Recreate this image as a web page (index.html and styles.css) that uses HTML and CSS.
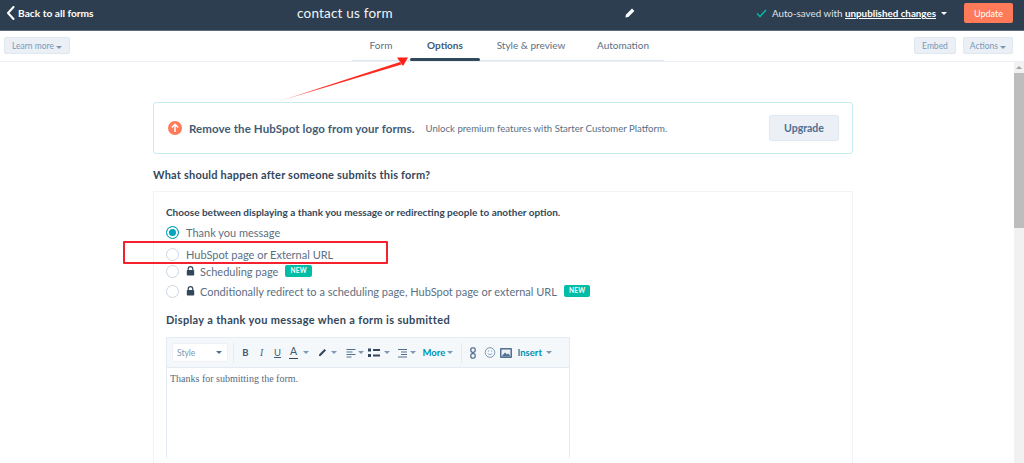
FILE: index.html
```html
<!DOCTYPE html>
<html lang="en">

<head>
  <meta charset="UTF-8" />
  <title>contact us form</title>
  <link rel="stylesheet" href="styles.css">
</head>

<body>
  <!-- top bar -->
  <header class="topbar">
    <a class="back">
      <svg width="9" height="14" viewBox="0 0 9 14"><path d="M6.500 1 1 7l5.500 6" fill="none" stroke="#fff" stroke-width="2" stroke-linecap="round" stroke-linejoin="round"/></svg>
      Back to all forms
    </a>
    <div class="form-name">contact us form</div>
    <svg class="pencil" width="10" height="10" viewBox="0 0 10 10"><path d="M7 .6 9.400 3 3.300 9.100.4 9.600.9 6.700z" fill="#fff"/></svg>
    <div class="save-state">
      <svg width="11" height="9" viewBox="0 0 11 9"><path d="M1 4.500 4 7.500 10 1" fill="none" stroke="#00bda5" stroke-width="1.500"/></svg>
      <span>Auto-saved with <b>unpublished changes</b></span>
      <i class="caret caret-white"></i>
    </div>
    <button class="btn-update">Update</button>
  </header>

  <!-- tabs -->
  <nav class="subnav">
    <button class="btn-small btn-learn">Learn more <i class="caret"></i></button>
    <ul class="tabs">
      <li>Form</li>
      <li class="active">Options</li>
      <li>Style &amp; preview</li>
      <li>Automation</li>
    </ul>
    <div class="subnav-right">
      <button class="btn-small btn-embed">Embed</button>
      <button class="btn-small btn-actions">Actions <i class="caret"></i></button>
    </div>
  </nav>

  <div class="page">
    <main class="content">
      <div class="banner">
        <svg class="up-icon" width="14" height="14" viewBox="0 0 14 14"><circle cx="7" cy="7" r="7" fill="#ff7a59"/><path d="M7 11V3.500M3.800 6.500 7 3.300l3.200 3.200" fill="none" stroke="#fff" stroke-width="1.500"/></svg>
        <strong class="banner-title">Remove the HubSpot logo from your forms.</strong>
        <span class="banner-text">Unlock premium features with Starter Customer Platform.</span>
        <button class="btn-upgrade">Upgrade</button>
      </div>

      <h2 class="question">What should happen after someone submits this form?</h2>

      <section class="card">
        <p class="choose">Choose between displaying a thank you message or redirecting people to another option.</p>

        <div class="option opt-thanks"><span class="radio checked"></span>Thank you message</div>
        <div class="option opt-hubspot"><span class="radio"></span>HubSpot page or External URL</div>
        <div class="option opt-sched">
          <span class="radio"></span>
          <svg class="lock" width="9" height="10" viewBox="0 0 9 10"><path d="M2.200 4V3a2.300 2.300 0 0 1 4.600 0v1" fill="none" stroke="#33475b" stroke-width="1.200"/><rect x=".8" y="4" width="7.400" height="5.500" rx=".8" fill="#33475b"/></svg>
          Scheduling page <span class="tag-new">NEW</span>
        </div>
        <div class="option opt-cond">
          <span class="radio"></span>
          <svg class="lock" width="9" height="10" viewBox="0 0 9 10"><path d="M2.200 4V3a2.300 2.300 0 0 1 4.600 0v1" fill="none" stroke="#33475b" stroke-width="1.200"/><rect x=".8" y="4" width="7.400" height="5.500" rx=".8" fill="#33475b"/></svg>
          Conditionally redirect to a scheduling page, HubSpot page or external URL <span class="tag-new">NEW</span>
        </div>

        <h3 class="display-title">Display a thank you message when a form is submitted</h3>

        <div class="editor">
          <div class="toolbar">
            <div class="style-select">Style <i class="caret caret-dark"></i></div>
            <span class="sep"></span>
            <span class="tool tool-b">B</span>
            <span class="tool tool-i">I</span>
            <span class="tool tool-u">U</span>
            <span class="tool"><span class="tool-a">A</span></span><i class="caret caret-a"></i>
            <svg class="tool-svg tool-pen" height="12" viewBox="0 0 12 12"><path d="M3 7.500 8.500 2l1.500 1.500L4.500 9H3z" fill="#33475b"/><path d="M1 11.300h7" stroke="#fff" stroke-width="1.200"/></svg><i class="caret caret-pen"></i>
            <svg class="tool-svg tool-align" height="10" viewBox="0 0 11 10"><path d="M1 1.500h9M1 4h6M1 6.500h9M1 9h5" stroke="#516f90" stroke-width="1.200"/></svg><i class="caret caret-a"></i>
            <svg class="tool-svg tool-list" height="10" viewBox="0 0 12 10"><path d="M5 2h7M5 7.500h7" stroke="#33475b" stroke-width="2"/><rect x="0" y="0.500" width="3" height="3" fill="#33475b"/><rect x="0" y="6" width="3" height="3" fill="#33475b"/></svg><i class="caret caret-list"></i>
            <svg class="tool-svg tool-indent" height="10" viewBox="0 0 12 10"><path d="M3 1.500h9M6 4h6M6 6.500h6M3 9h9" stroke="#516f90" stroke-width="1.200"/></svg><i class="caret caret-pen"></i>
            <span class="tool-link link-more">More</span><i class="caret"></i>
            <span class="sep sep-two"></span>
            <svg class="tool-svg tool-chain" height="12" viewBox="0 0 6 12"><rect x=".8" y=".8" width="4.400" height="4.600" rx="1.800" fill="none" stroke="#516f90" stroke-width="1.300"/><rect x=".8" y="6.600" width="4.400" height="4.600" rx="1.800" fill="none" stroke="#516f90" stroke-width="1.300"/></svg>
            <svg class="tool-svg tool-smile" height="11" viewBox="0 0 11 11"><circle cx="5.500" cy="5.500" r="4.800" fill="none" stroke="#7c98b6"/><path d="M3.200 6.500c1.200 1.300 3.400 1.300 4.600 0" fill="none" stroke="#7c98b6" stroke-width=".8"/><path d="M3.500 4h1M6.500 4h1" stroke="#7c98b6"/></svg>
            <svg class="tool-svg tool-img" height="10" viewBox="0 0 12 10"><rect width="12" height="10" rx="1" fill="#516f90"/><rect x="1.500" y="1.500" width="9" height="7" fill="#eaf0f6"/><path d="M1.500 8.500 5 4.500l2 2 1.500-1 2 3z" fill="#516f90"/></svg>
            <span class="tool-link link-insert">Insert</span><i class="caret"></i>
          </div>
          <div class="editor-body">Thanks for submitting the form.</div>
        </div>
      </section>
    </main>

    <div class="scrollbar">
      <span class="scroll-up"></span>
      <div class="scroll-thumb"></div>
    </div>
  </div>

  <!-- screenshot annotations -->
  <svg class="mark-arrow" width="140" height="50" viewBox="0 0 140 50">
    <defs>
      <linearGradient id="fade" x1="0" y1="1" x2="1" y2="0">
        <stop offset="0" stop-color="#ff4a40" stop-opacity=".5"/>
        <stop offset=".35" stop-color="#ff2a1f"/>
      </linearGradient>
    </defs>
    <path d="M1 44.500 123 5 124.500 7.500z" fill="url(#fade)"/>
    <path d="M131 .5 120 .5 126 9z" fill="#ff1f14"/>
  </svg>
  <div class="mark-box"></div>
</body>

</html>
```

FILE: styles.css
```css
* {
  margin: 0;
  padding: 0;
  box-sizing: border-box;
}

html,
body {
  height: 463px;
  overflow: hidden;
}

body {
  position: relative;
  background: #fff;
  font-family: Lato, "Noto Sans", sans-serif;
  color: #33475b;
}

ul {
  list-style: none;
}

button {
  font-family: inherit;
  border: none;
}

.caret {
  display: inline-block;
  flex: none;
  width: 0;
  height: 0;
  border-left: 3px solid transparent;
  border-right: 3px solid transparent;
  border-top: 3px solid #7c98b6;
}

.caret-white {
  border-top-color: #fff;
}

.caret-dark {
  border-top-color: #516f90;
}

/* top bar */
.topbar {
  display: flex;
  align-items: center;
  height: 31px;
  padding: 0 11px 4px 7px;
  background: #2d3e50;
  border-bottom: 1px solid #5d6c7c;
  color: #fff;
}

.back {
  display: flex;
  flex: none;
  align-items: center;
  gap: 2px;
  width: 290px;
  font-size: 10.200px;
  font-weight: 700;
}

.form-name {
  flex: none;
  width: 328px;
  font-size: 13.500px;
  color: #f2f5f8;
  letter-spacing: .2px;
}

.pencil {
  flex: none;
}

.save-state {
  display: flex;
  flex: none;
  align-items: center;
  gap: 5px;
  margin-left: auto;
  font-size: 9.800px;
  color: #dfe3eb;
  white-space: nowrap;
}

.save-state b {
  text-decoration: underline;
  color: #fff;
}

.btn-update {
  flex: none;
  margin-left: 17px;
  width: 49px;
  height: 20px;
  border-radius: 2px;
  background: #ff7a59;
  color: #fff;
  font-size: 9px;
}

/* tabs */
.subnav {
  display: flex;
  align-items: center;
  height: 31px;
  padding: 0 11px 1px 4px;
  border-bottom: 1px solid #eaf0f6;
}

.btn-small {
  height: 17px;
  background: #eaf0f6;
  border: 1px solid #dfe7f0;
  border-radius: 2px;
  color: #7c98b6;
  font-size: 8.500px;
}

.btn-learn {
  width: 66px;
  flex: none;
}

.tabs {
  display: flex;
  align-self: flex-end;
  height: 31px;
  margin-left: 282px;
  margin-bottom: -1px;
  border-bottom: 1px solid #dfe7f0;
}

.tabs li {
  padding: 9px 0 0;
  font-size: 10px;
  color: #5c6f82;
  text-align: center;
  width: 70px;
}

.tabs li:first-child {
  width: 58px;
}

.tabs li.active {
  position: relative;
  font-weight: 700;
  color: #425b76;
}

.tabs li.active::after {
  content: "";
  position: absolute;
  left: 0;
  right: 0;
  bottom: -1px;
  height: 3px;
  border-radius: 2px;
  background: #33475b;
}

.tabs li:nth-child(3) {
  width: 96px;
  padding-left: 6px;
}

.tabs li:nth-child(4) {
  width: 88px;
  padding-left: 21px;
  text-align: left;
}

.subnav-right {
  display: flex;
  gap: 7px;
  margin-left: auto;
}

.btn-embed {
  width: 42px;
}

.btn-actions {
  width: 50px;
}

/* page */
.page {
  display: flex;
  height: 402px;
}

.content {
  flex: 1;
  padding: 40px 0 0 153px;
  overflow: hidden;
}

.banner {
  display: flex;
  align-items: center;
  width: 700px;
  height: 52px;
  padding: 0 13px 0 14px;
  border: 1px solid #c5edf2;
  border-radius: 3px;
}

.up-icon {
  flex: none;
  margin-right: 7px;
}

.banner-title {
  font-size: 11.500px;
  letter-spacing: .1px;
  color: #425b76;
}

.banner-text {
  margin-left: 11px;
  font-size: 9.600px;
  color: #5c6f82;
}

.btn-upgrade {
  margin-left: auto;
  width: 70px;
  height: 26px;
  background: #eaf0f6;
  border: 1px solid #dfe7f0;
  border-radius: 2px;
  color: #506e91;
  font-size: 10.500px;
  font-weight: 700;
}

.question {
  margin-top: 14px;
  font-size: 11px;
  line-height: 14px;
  letter-spacing: .2px;
  color: #33475b;
}

.card {
  width: 700px;
  height: 280px;
  margin-top: 9px;
  padding: 14px 12px 0;
  border: 1px solid #f1f3f6;
  border-bottom: none;
}

.choose {
  font-size: 10px;
  line-height: 13px;
  font-weight: 700;
  color: #33475b;
}

.option {
  display: flex;
  align-items: center;
  height: 14px;
  font-size: 11px;
  color: #5c6f82;
  white-space: nowrap;
}

.opt-thanks {
  margin-top: 6px;
}

.opt-hubspot {
  margin-top: 8px;
}

.opt-sched {
  margin-top: 3px;
}

.opt-cond {
  margin-top: 6px;
}

.radio {
  flex: none;
  width: 13px;
  height: 13px;
  margin-right: 7px;
  border: 1px solid #cbd6e2;
  border-radius: 50%;
  background: #fff;
}

.radio.checked {
  border: 1.500px solid #00a4bd;
  box-shadow: inset 0 0 0 2px #fff;
  background: #00a4bd;
}

.lock {
  margin: 0 5px 0 0;
  flex: none;
}

.tag-new {
  margin-left: 7px;
  padding: 0 5px;
  height: 12px;
  line-height: 12px;
  border-radius: 2px;
  background: #00bda5;
  color: #fff;
  font-size: 6.500px;
  font-weight: 700;
  letter-spacing: .3px;
}

.display-title {
  margin-top: 15px;
  font-size: 11px;
  line-height: 14px;
  letter-spacing: .34px;
  color: #33475b;
}

.editor {
  width: 404px;
  margin-top: 10px;
  border: 1px solid #e5ebf2;
  border-bottom: none;
}

/* toolbar items sit at irregular gaps, so each one has its own margin */
.toolbar {
  display: flex;
  align-items: center;
  height: 30px;
  padding: 0 0 0 5px;
  background: #f5f8fa;
  border-bottom: 1px solid #e5ebf2;
}

.style-select {
  display: flex;
  flex: none;
  align-items: center;
  justify-content: space-between;
  width: 56px;
  height: 19px;
  padding: 0 5px 0 4px;
  background: #fff;
  border: 1px solid #eef2f6;
  border-radius: 2px;
  font-size: 8.500px;
  color: #7c98b6;
}

.sep {
  flex: none;
  width: 1px;
  height: 20px;
  margin: 0 3.500px 0 5px;
  background: #e5ebf2;
}

.tool {
  flex: none;
  width: 16px;
  text-align: center;
  font-size: 9.500px;
  color: #425b76;
}

.tool-b {
  font-weight: 700;
}

.tool-i {
  font-style: italic;
  font-family: "Liberation Serif", serif;
}

.tool-u {
  text-decoration: underline;
}

.tool-a {
  display: inline-block;
  padding: 0 1px 1px;
  font-size: 10.500px;
  border-bottom: 1.500px solid #33475b;
  line-height: 11px;
}

.caret-a {
  margin-left: 1px;
}

.caret-pen {
  margin-left: 3px;
}

.caret-list {
  margin-left: 4px;
}

.tool-svg {
  flex: none;
  width: 12px;
}

.tool-pen {
  margin-left: 7px;
}

.tool-align {
  margin-left: 8px;
}

.tool-list {
  margin-left: 4px;
}

.tool-indent {
  margin-left: 5px;
}

.tool-link {
  flex: none;
  font-size: 9.500px;
  font-weight: 700;
  color: #0091ae;
}

.link-more {
  width: 24px;
  margin-left: 7px;
}

.link-insert {
  width: 28px;
  margin-left: 6px;
}

.sep-two {
  margin: 0 0 0 8px;
}

.tool-chain {
  margin-left: 5px;
}

.tool-smile {
  margin-left: 5px;
}

.tool-img {
  margin-left: 4px;
}

.editor-body {
  height: 90px;
  padding: 5px 3px;
  font-family: "Liberation Serif", serif;
  font-size: 10px;
  color: #566b80;
}

/* scrollbar, as in the screenshot */
.scrollbar {
  position: relative;
  flex: none;
  width: 10px;
  background: #f1f1f1;
}

.scroll-up {
  display: block;
  width: 0;
  margin: 4px auto 0;
  border-left: 3px solid transparent;
  border-right: 3px solid transparent;
  border-bottom: 3px solid #a3a3a3;
}

.scroll-thumb {
  margin-top: 4px;
  height: 155px;
  background: #bdbdbd;
}

/* annotations lying over the page */
.mark-arrow {
  position: absolute;
  left: 277px;
  top: 57px;
}

.mark-box {
  position: absolute;
  left: 123px;
  top: 241px;
  width: 265px;
  height: 23px;
  border: 2px solid #f5222d;
  border-radius: 1px;
}
```
